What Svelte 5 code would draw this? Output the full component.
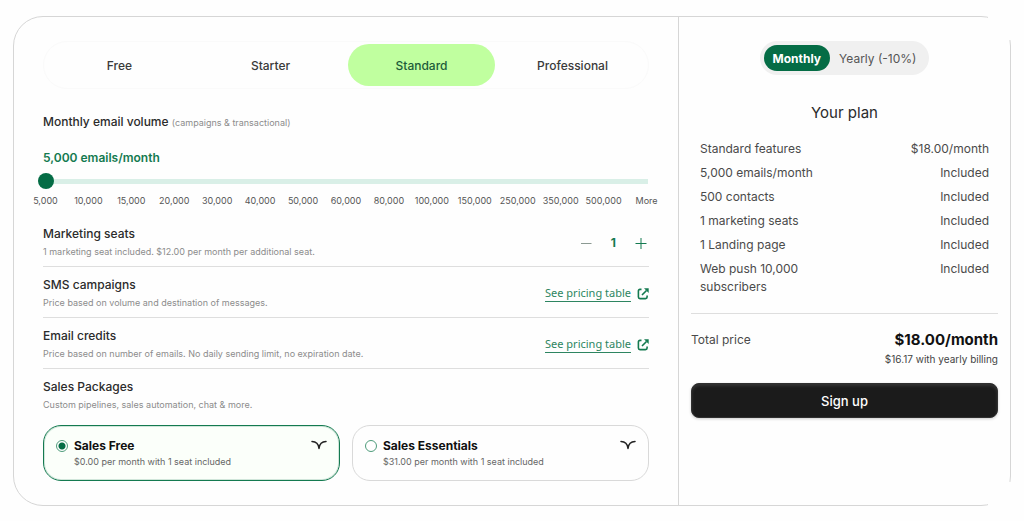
<script>
  const plans = ['Free', 'Starter', 'Standard', 'Professional'];

  const volumes = [
    '5,000', '10,000', '15,000', '20,000', '30,000', '40,000', '50,000', '60,000',
    '80,000', '100,000', '150,000', '250,000', '350,000', '500,000', 'More'
  ];

  const addons = [
    { title: 'SMS campaigns', text: 'Price based on volume and destination of messages.' },
    { title: 'Email credits', text: 'Price based on number of emails. No daily sending limit, no expiration date.' }
  ];

  const packages = [
    { id: 'free', title: 'Sales Free', price: '$0.00' },
    { id: 'essentials', title: 'Sales Essentials', price: '$31.00' }
  ];

  let plan = 'Standard';
  let volume = 0;
  let seats = 1;
  let salesPackage = 'free';
  let billing = 'monthly';

  $: emails = volumes[volume];
  $: summary = [
    { label: `${plan} features`, value: '$18.00/month' },
    { label: `${emails} emails/month`, value: 'Included' },
    { label: '500 contacts', value: 'Included' },
    { label: `${seats} marketing seats`, value: 'Included' },
    { label: '1 Landing page', value: 'Included' },
    { label: 'Web push 10,000 subscribers', value: 'Included' }
  ];
</script>

<main class="pricing">
  <section class="config">
    <div class="plans">
      {#each plans as name}
        <button
          type="button"
          class="plan"
          class:active={plan === name}
          aria-pressed={plan === name}
          on:click={() => (plan = name)}
        >
          {name}
        </button>
      {/each}
    </div>

    <div class="volume">
      <label class="title" for="volume">
        Monthly email volume <small>(campaigns &amp; transactional)</small>
      </label>
      <output class="volume-value" for="volume">{emails} emails/month</output>
      <input id="volume" class="slider" type="range" min="0" max={volumes.length - 1} bind:value={volume} />
      <div class="ticks">
        {#each volumes as tick}
          <span>{tick}</span>
        {/each}
      </div>
    </div>

    <div class="row">
      <div>
        <h3 class="title">Marketing seats</h3>
        <p class="hint">1 marketing seat included. $12.00 per month per additional seat.</p>
      </div>
      <div class="stepper">
        <button type="button" aria-label="Remove seat" disabled={seats <= 1} on:click={() => (seats -= 1)}>
          <svg width="12" height="12" viewBox="0 0 12 12"><path d="M1 6.5h10.5" /></svg>
        </button>
        <span class="seats">{seats}</span>
        <button type="button" aria-label="Add seat" on:click={() => (seats += 1)}>
          <svg width="12" height="12" viewBox="0 0 12 12"><path d="M.5 6.5h11M6 1v11" /></svg>
        </button>
      </div>
    </div>

    {#each addons as addon}
      <div class="row">
        <div>
          <h3 class="title">{addon.title}</h3>
          <p class="hint">{addon.text}</p>
        </div>
        <a class="pricing-link" href="#pricing">
          <span>See pricing table</span>
          <svg width="12" height="12" viewBox="0 0 12 12">
            <path d="M4.500 1.400H3Q1.400 1.400 1.400 3V9Q1.400 10.600 3 10.600H8.500Q10.100 10.600 10.100 9V7.500M5 7l4.500-4.500" />
            <path class="tip" d="M7 .3h4.700v4.700z" />
          </svg>
        </a>
      </div>
    {/each}

    <div class="row last">
      <div>
        <h3 class="title">Sales Packages</h3>
        <p class="hint">Custom pipelines, sales automation, chat &amp; more.</p>
      </div>
    </div>

    <div class="packages">
      {#each packages as item}
        <label class="package" class:selected={salesPackage === item.id}>
          <input type="radio" name="package" value={item.id} bind:group={salesPackage} />
          <span class="package-body">
            <span class="package-title">{item.title}</span>
            <span class="package-price">{item.price} per month with 1 seat included</span>
          </span>
          <svg width="16" height="10" viewBox="0 0 16 10">
            <path d="M1 1.500C4.500 1.500 7.500 4 8 8.500C8.500 4 11.500 1.500 15 1.500" />
          </svg>
        </label>
      {/each}
    </div>
  </section>

  <aside class="summary">
    <div class="billing">
      <button type="button" class:active={billing === 'monthly'} on:click={() => (billing = 'monthly')}>
        Monthly
      </button>
      <button type="button" class:active={billing === 'yearly'} on:click={() => (billing = 'yearly')}>
        Yearly (-10%)
      </button>
    </div>

    <h2>Your plan</h2>

    <ul class="lines">
      {#each summary as line}
        <li>
          <span class="line-label">{line.label}</span>
          <span>{line.value}</span>
        </li>
      {/each}
    </ul>

    <div class="total">
      <span class="total-label">Total price</span>
      <div class="total-price">
        <strong>$18.00/month</strong>
        <span>$16.17 with yearly billing</span>
      </div>
    </div>

    <button type="button" class="signup">Sign up</button>
  </aside>
</main>

<style>
  :global(body) {
    background: #fefefe;
  }

  .pricing {
    position: relative;
    display: grid;
    grid-template-columns: 2fr 1fr;
    margin: 16px 13px;
    border: 1px solid #d6d6d6;
    border-radius: 30px;
    font-family: Inter, 'Liberation Sans', sans-serif;
    color: #1f1f1f;
  }

  /* the outline stays open at both right-hand corners */
  .pricing::before,
  .pricing::after {
    content: '';
    position: absolute;
    right: -1px;
    width: 23px;
    height: 24px;
    background: #fefefe;
  }

  .pricing::before {
    top: -1px;
  }

  .pricing::after {
    bottom: -1px;
  }

  button,
  input {
    margin: 0;
    font-family: inherit;
  }

  button {
    padding: 0;
    border: none;
    background: none;
    cursor: pointer;
  }

  h2,
  h3,
  p,
  ul {
    margin: 0;
    padding: 0;
  }

  svg {
    display: block;
    flex-shrink: 0;
    fill: none;
    stroke: currentColor;
  }

  .config {
    min-width: 0;
    padding: 24px 29px;
  }

  .plans {
    display: grid;
    grid-template-columns: repeat(4, 1fr);
    gap: 4px;
    padding: 2px;
    border: 1px solid #fafafa;
    border-radius: 25px;
  }

  .plan {
    height: 42px;
    border-radius: 21px;
    font-size: 12px;
    font-weight: 500;
    color: #3a3a3a;
  }

  .plan.active {
    background: #c0ff9f;
    color: #1d5c3a;
  }

  .title {
    font-size: 12px;
    font-weight: 500;
    line-height: 18px;
    color: #2b2b2b;
  }

  .title small {
    font-size: 9px;
    font-weight: 400;
    color: #8c8c8c;
  }

  .volume {
    display: flex;
    flex-direction: column;
    padding-top: 24px;
  }

  .volume-value {
    margin-top: 17px;
    font-size: 12px;
    font-weight: 600;
    line-height: 18px;
    color: #147a50;
  }

  .slider {
    appearance: none;
    height: 16px;
    margin: 6px -5px 0;
    background: linear-gradient(#d9efe7, #d9efe7) center / calc(100% - 12px) 5px no-repeat;
  }

  .slider::-webkit-slider-thumb {
    appearance: none;
    width: 16px;
    height: 16px;
    border-radius: 50%;
    background: #046c45;
  }

  .ticks {
    display: grid;
    grid-template-columns: repeat(15, 1fr);
    margin: 6px -19px 9px;
    font-size: 9px;
    line-height: 12px;
    text-align: center;
    color: #555;
  }

  .row {
    display: flex;
    align-items: center;
    justify-content: space-between;
    padding: 9px 0 6px;
    border-bottom: 1px solid #dedede;
  }

  .row.last {
    border-bottom: none;
  }

  .hint {
    font-size: 9px;
    line-height: 17px;
    color: #8c8c8c;
  }

  .stepper {
    display: flex;
    align-items: center;
    gap: 19px;
    padding-right: 2px;
    color: #147a50;
  }

  .stepper button {
    color: #147a50;
  }

  .stepper button:disabled {
    color: #8c9a93;
  }

  .seats {
    font-size: 12px;
    font-weight: 700;
    line-height: 18px;
  }

  .pricing-link {
    display: flex;
    align-items: center;
    gap: 6px;
    font-family: 'Noto Sans', 'Open Sans', sans-serif;
    font-size: 11px;
    line-height: 16px;
    color: #2d8561;
    text-decoration: none;
  }

  .pricing-link span {
    border-bottom: 1px solid #2d8561;
  }

  .pricing-link svg {
    stroke: #147a50;
    stroke-width: 1.6;
  }

  .pricing-link .tip {
    fill: #147a50;
    stroke: none;
  }

  .packages {
    display: grid;
    grid-template-columns: 1fr 1fr;
    gap: 12px;
    padding-top: 6px;
  }

  .package {
    display: flex;
    align-items: flex-start;
    gap: 6px;
    padding: 11px 12px;
    border: 1px solid #d9d9d9;
    border-radius: 18px;
    cursor: pointer;
  }

  .package.selected {
    border-color: #147a50;
    background: #fbfffa;
    box-shadow: inset 0 0 0 1px #d0e6da;
  }

  .package input {
    appearance: none;
    flex-shrink: 0;
    width: 12px;
    height: 12px;
    margin-top: 3px;
    border: 1px solid #4e9c7b;
    border-radius: 50%;
    background: #fff;
  }

  .package input:checked {
    background: radial-gradient(circle, #046c45 3px, #fff 4px);
  }

  .package-body {
    display: flex;
    flex: 1;
    flex-direction: column;
  }

  .package-title {
    font-size: 12px;
    font-weight: 700;
    line-height: 18px;
    color: #111;
  }

  .package-price {
    font-size: 9px;
    line-height: 14px;
    color: #666;
  }

  .package svg {
    margin-top: 3px;
    stroke: #222;
    stroke-width: 1.5;
    stroke-linecap: round;
    stroke-linejoin: round;
  }

  .summary {
    display: flex;
    flex-direction: column;
    min-width: 0;
    padding: 24px 12px;
    border-left: 1px solid #d6d6d6;
  }

  .billing {
    display: flex;
    align-self: center;
    padding: 4px;
    border-radius: 17px;
    background: #f0f0f0;
  }

  .billing button {
    height: 26px;
    padding: 0 9px;
    border-radius: 13px;
    font-size: 12px;
    color: #555;
  }

  .billing button.active {
    background: #046c45;
    font-weight: 700;
    color: #fff;
  }

  h2 {
    margin-top: 27px;
    font-size: 15px;
    font-weight: 400;
    line-height: 22px;
    text-align: center;
    color: #2b2b2b;
  }

  .lines {
    display: flex;
    flex-direction: column;
    gap: 6px;
    padding: 16px 9px 17px;
    border-bottom: 1px solid #dedede;
    font-size: 12px;
    line-height: 18px;
    list-style: none;
    color: #4a4a4a;
  }

  .lines li {
    display: flex;
    justify-content: space-between;
  }

  .line-label {
    max-width: 120px;
  }

  .total {
    display: flex;
    justify-content: space-between;
    padding: 15px 0;
    line-height: 21px;
  }

  .total-label {
    font-size: 12px;
    color: #4a4a4a;
  }

  .total-price {
    display: flex;
    flex-direction: column;
    align-items: flex-end;
    font-size: 10px;
    line-height: 18px;
    color: #444;
  }

  .total-price strong {
    font-size: 15px;
    font-weight: 700;
    line-height: 21px;
    color: #111;
  }

  .signup {
    height: 35px;
    border: 1px solid #303030;
    border-radius: 8px;
    background: #1b1b1b;
    box-shadow: inset 0 2px 3px #333, 0 1px 3px rgba(0, 0, 0, 0.2);
    font-size: 13px;
    font-weight: 500;
    color: #fff;
  }
</style>
